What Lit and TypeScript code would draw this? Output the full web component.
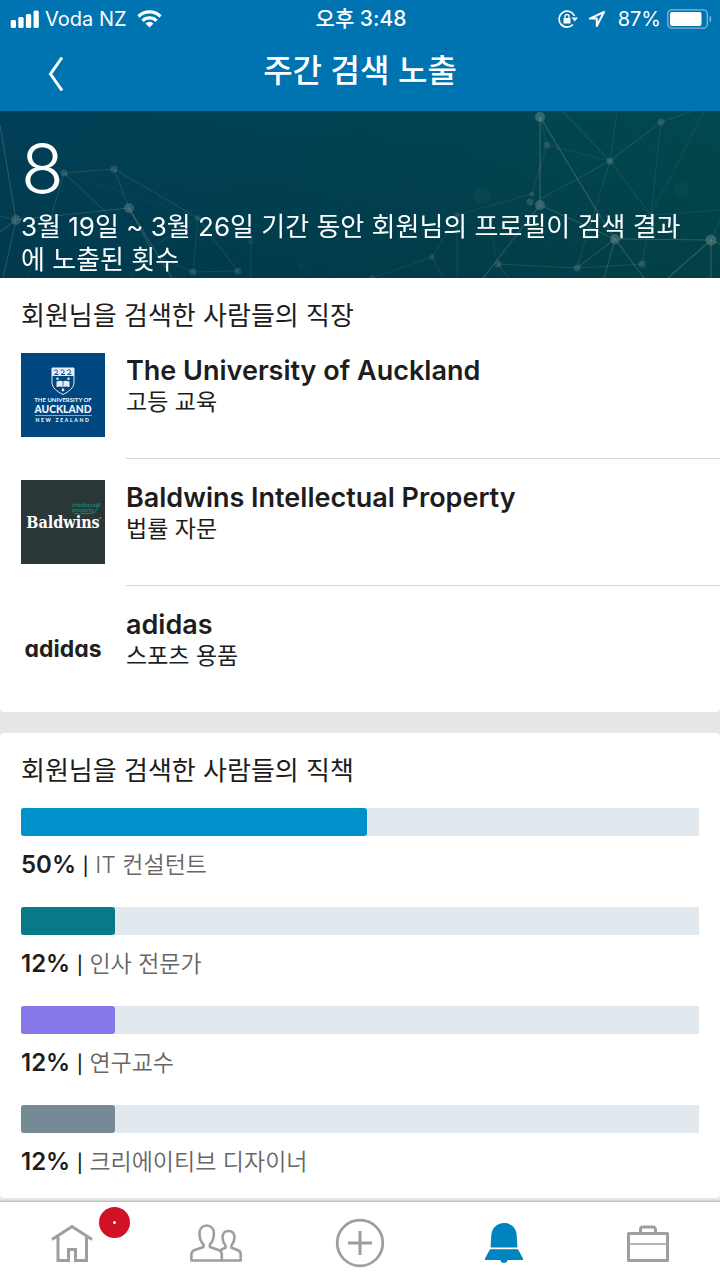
import { LitElement, html, css, svg } from "lit";
import { customElement, property } from "lit/decorators.js";
import { styleMap } from "lit/directives/style-map.js";

const auckland = svg`
  <svg viewBox="0 0 84 84" role="img" aria-label="The University of Auckland">
    <rect width="84" height="84" fill="#00467f" />
    <path d="M31 15h22v14c0 6-5 9.500-11 12.500c-6-3-11-6.500-11-12.500z" fill="#00467f" stroke="#e6edf4" stroke-width="1" />
    <path d="M31 15h22v8h-22z" fill="#e6edf4" />
    <g fill="none" stroke="#00467f" stroke-width=".9">
      <path d="M33 18c1.500-2 4-1 3.500 1s-2.500 1.500-3 2.500h4M39.500 18c1.500-2 4-1 3.500 1s-2.500 1.500-3 2.500h4M46 18c1.500-2 4-1 3.500 1s-2.500 1.500-3 2.500h4" />
    </g>
    <path d="M35.500 28.500c2.500-1 5-1 6.500 0c1.500-1 4-1 6.500 0v5.500c-2.500-.8-5-.8-6.500.2c-1.500-1-4-1-6.500-.2z" fill="#e6edf4" />
    <path d="M42 28.500v5.500" stroke="#00467f" stroke-width=".7" />
    <g fill="#e6edf4"><circle cx="36.500" cy="25.800" r="1.200" /><circle cx="47.500" cy="25.800" r="1.200" /><circle cx="42" cy="37" r="1.400" /></g>
    <g fill="#f2f6fa" text-anchor="middle" font-family="Lato, sans-serif">
      <text x="42" y="49" font-size="6" font-weight="700">THE UNIVERSITY OF</text>
      <text x="42" y="60" font-size="10.300" font-weight="900">AUCKLAND</text>
      <text x="42" y="69" font-size="5" font-weight="900" letter-spacing="1.700">NEW ZEALAND</text>
    </g>
    <path d="M14 62.500h57" stroke="#a9bfd4" stroke-width=".8" />
  </svg>`;

const baldwins = svg`
  <svg viewBox="0 0 84 84" role="img" aria-label="Baldwins Intellectual Property">
    <rect width="84" height="84" fill="#2b3637" />
    <g fill="#12827f" font-family="Lato, sans-serif" font-size="6" font-style="italic" font-weight="700">
      <text x="51" y="27">intellectual</text>
      <text x="51" y="32">property</text>
    </g>
    <path d="M77 23c0 7-3 10.500-9 10.500h-8l-3 3v-3h-4" fill="none" stroke="#12827f" stroke-width="1" />
    <text x="42" y="48" text-anchor="middle" fill="#fff" font-family="DejaVu Serif Condensed, DejaVu Serif, serif" font-size="16" font-weight="700">Baldwins</text>
    <circle cx="79.500" cy="38" r=".8" fill="#aab0b0" />
  </svg>`;

const adidas = svg`
  <svg viewBox="0 0 84 84" role="img" aria-label="adidas">
    <text class="adidas" x="42" y="50" text-anchor="middle" fill="#231f20">adidas</text>
  </svg>`;

const companies = [
  { name: "The University of Auckland", field: "고등 교육", logo: auckland },
  { name: "Baldwins Intellectual Property", field: "법률 자문", logo: baldwins },
  { name: "adidas", field: "스포츠 용품", logo: adidas },
];

const titles = [
  { percent: 50, fill: 51, label: "IT 컨설턴트", color: "#0091ca" },
  { percent: 12, fill: 13.8, label: "인사 전문가", color: "#077a87" },
  { percent: 12, fill: 13.8, label: "연구교수", color: "#8678e8" },
  { percent: 12, fill: 13.8, label: "크리에이티브 디자이너", color: "#768a95" },
];

/* Constellation drawn behind the summary: [x1, y1, x2, y2, opacity] and [x, y, r, opacity]. */
const links = [
  [0, 14, 16, 109, 0.3], [16, 109, 0, 121, 0.3], [16, 109, 3, 167, 0.25], [16, 109, 0, 105, 0.2],
  [16, 109, 129, 97, 0.3], [64, 62, 50, 109, 0.18], [64, 62, 114, 58, 0.22], [64, 62, 107, 102, 0.18],
  [114, 58, 129, 97, 0.2], [114, 58, 198, 107, 0.2], [129, 97, 172, 167, 0.35], [129, 97, 150, 136, 0.3],
  [198, 107, 156, 134, 0.14], [198, 107, 193, 161, 0.14], [198, 107, 238, 160, 0.18], [156, 145, 193, 161, 0.18],
  [193, 161, 238, 160, 0.2], [156, 134, 130, 167, 0.12], [64, 62, 198, 107, 0.07], [251, 130, 251, 167, 0.14],
  [40, 130, 28, 167, 0.08], [290, 122, 312, 167, 0.06], [345, 90, 330, 167, 0.05],
  [540, 6, 540, 94, 0.38], [540, 6, 600, 105, 0.38], [540, 6, 547, 34, 0.15], [547, 34, 532, 83, 0.15],
  [547, 34, 610, 50, 0.15], [562, 0, 610, 50, 0.17], [610, 50, 661, 11, 0.18], [661, 11, 693, 0, 0.18],
  [610, 50, 617, 0, 0.15], [610, 50, 540, 88, 0.2], [610, 50, 653, 107, 0.17], [610, 50, 577, 157, 0.15],
  [661, 11, 651, 104, 0.15], [704, 0, 651, 104, 0.13], [619, 0, 656, 47, 0.06], [651, 104, 720, 99, 0.14],
  [532, 83, 457, 104, 0.15], [540, 94, 483, 167, 0.33], [540, 94, 615, 128, 0.3], [600, 105, 615, 128, 0.3],
  [615, 128, 711, 129, 0.36], [615, 128, 577, 157, 0.25], [615, 128, 604, 167, 0.3], [615, 128, 644, 167, 0.36],
  [711, 129, 668, 167, 0.35], [711, 129, 711, 167, 0.36], [711, 129, 720, 133, 0.3], [711, 129, 720, 110, 0.15],
  [498, 153, 577, 157, 0.22], [577, 157, 642, 153, 0.2], [642, 153, 651, 104, 0.15], [498, 153, 508, 167, 0.2],
  [498, 153, 490, 118, 0.1], [432, 146, 457, 104, 0.14], [432, 146, 372, 167, 0.14], [457, 104, 457, 167, 0.14],
  [432, 146, 443, 167, 0.14], [378, 135, 392, 100, 0.05], [545, 125, 550, 167, 0.05],
];

const dots = [
  [16, 109, 5, 0.36], [64, 62, 3.5, 0.3], [114, 58, 3.5, 0.28], [129, 97, 5, 0.4], [198, 107, 3, 0.18],
  [193, 161, 3.5, 0.28], [238, 160, 3.5, 0.24], [251, 130, 3, 0.12], [301, 155, 2.5, 0.08], [347, 88, 2.5, 0.05],
  [482, 85, 9, 0.06], [540, 6, 5, 0.45], [547, 34, 3.5, 0.25], [532, 83, 2.5, 0.26], [530, 91, 3.5, 0.3],
  [540, 94, 5, 0.4], [610, 50, 3.5, 0.32], [661, 11, 3.5, 0.3], [681, 78, 8, 0.06], [651, 104, 3, 0.12],
  [615, 128, 5, 0.42], [711, 129, 5.5, 0.42], [577, 157, 3.5, 0.3], [642, 153, 3.5, 0.3], [498, 153, 3.5, 0.28],
  [432, 146, 3, 0.2], [457, 104, 3, 0.16], [372, 167, 3, 0.18],
];

const fontStack = css`"Inter", "Noto Sans CJK KR", sans-serif`;

@customElement("status-bar")
class StatusBar extends LitElement {
  static styles = css`
    :host {
      display: grid;
      grid-template-columns: 1fr auto 1fr;
      align-items: center;
      height: 37px;
      padding: 0 8px 0 10px;
      font: 400 20px/24px ${fontStack};
      color: #fff;
    }
    .side { display: flex; align-items: center; gap: 6px; }
    .end { justify-content: flex-end; }
    .time { font-size: 21px; font-weight: 500; }
    .carrier { margin-right: 4px; }
    .arrow { margin: 0 6px 0 4px; }
    svg { display: block; flex: none; }
  `;
  render() {
    return html`
      <div class="side">
        <svg width="29" height="18" viewBox="0 0 29 18" fill="#fff" aria-hidden="true">
          <rect x=".7" y="10" width="5.300" height="8" rx="1.500" /><rect x="8.300" y="7" width="5.300" height="11" rx="1.500" />
          <rect x="15.900" y="4" width="5.300" height="14" rx="1.500" /><rect x="23.500" y=".5" width="5.300" height="17.500" rx="1.500" />
        </svg>
        <span class="carrier">Voda NZ</span>
        <svg width="25" height="18" viewBox="0 0 25 18" aria-hidden="true">
          <g fill="none" stroke="#fff" stroke-width="3.200">
            <path d="M1.500 6.500a15.500 15.500 0 0 1 22 0" /><path d="M5.500 10.800a10 10 0 0 1 14 0" />
          </g>
          <path d="M12.500 17.500l-4-4a5.600 5.600 0 0 1 8 0z" fill="#fff" />
        </svg>
      </div>
      <span class="time">오후 3:48</span>
      <div class="side end">
        <svg width="20" height="18" viewBox="0 0 20 18" fill="none" stroke="#fff" stroke-width="1.700" aria-hidden="true">
          <path d="M16.500 6A8 8 0 1 0 15 14.500" />
          <path d="M13.500 7.500h6.500l-3.200 4z" fill="#fff" stroke="none" />
          <rect x="5.500" y="8" width="7" height="5.500" rx=".6" fill="#fff" stroke="none" />
          <path d="M7 8.500V6.500a2 2 0 0 1 4 0v2" stroke-width="1.300" />
        </svg>
        <svg class="arrow" width="18" height="18" viewBox="0 0 18 18" fill="none" stroke="#fff" stroke-width="2" stroke-linejoin="round" aria-hidden="true">
          <path d="M16 2L1.800 8.600h7v7.400z" />
        </svg>
        <span>87%</span>
        <svg width="45" height="20" viewBox="0 0 45 20" aria-hidden="true">
          <rect x=".8" y=".8" width="39.500" height="18.400" rx="4" fill="none" stroke="#7fb8dc" stroke-width="1.300" />
          <rect x="3" y="3" width="31.500" height="14" rx="2" fill="#fff" />
          <path d="M42.500 6.500c2.300 1.200 2.300 5.800 0 7z" fill="#7fb8dc" />
        </svg>
      </div>
    `;
  }
}

@customElement("tab-bar")
class TabBar extends LitElement {
  static styles = css`
    :host {
      display: block;
      background: #fff;
      border-top: 1px solid #bdbebf;
      box-shadow: 0 -1px 1px #d8d8d8;
    }
    nav { display: grid; grid-template-columns: repeat(5, 1fr); height: 78px; }
    a { position: relative; display: flex; align-items: center; justify-content: center; padding-top: 4px; color: #9d9e9f; }
    .active { color: #0084bf; }
    svg { display: block; overflow: visible; }
    .badge {
      position: absolute;
      left: calc(50% + 27px);
      top: 5px;
      display: grid;
      place-items: center;
      width: 31px;
      height: 31px;
      border-radius: 50%;
      background: #d11124;
    }
    .badge::after { content: ""; width: 3px; height: 3px; border-radius: 50%; background: #fff; }
  `;
  render() {
    return html`
      <nav aria-label="기본 메뉴">
        <a href="#home" aria-label="홈">
          <svg width="42" height="38" viewBox="0 0 42 38" fill="none" stroke="currentColor" stroke-width="3">
            <path d="M1 15.500L21 2.500l20 13" /><path d="M7 13v23.500h10.500V25.500h7v11H35.500V13" />
          </svg>
          <span class="badge"></span>
        </a>
        <a href="#network" aria-label="인맥">
          <svg width="52" height="38" viewBox="0 0 52 38" fill="none" stroke="currentColor" stroke-width="2.600" stroke-linejoin="round">
            <path d="M13.500 20.500c-3-3-4-7-4-11c0-5 3-8 7.200-8s7.200 3 7.200 8c0 4-1 8-4 11v2.500l8.500 3c2.500.9 3.400 2.200 3.400 4.500v6H1.400v-6c0-2.300.9-3.600 3.400-4.500l8.700-3z" />
            <path d="M30.500 26l5-2.300v-2.200c-2-2.500-3-5-3-8c0-4 2.300-6.500 6-6.500s6 2.500 6 6.500c0 3-1 5.500-3 8v2.200l6.500 2.600c2 .8 2.700 2.200 2.700 4.200v6H31.800" />
          </svg>
        </a>
        <a href="#post" aria-label="글쓰기">
          <svg width="50" height="50" viewBox="0 0 50 50" fill="none" stroke="currentColor" stroke-width="2.800">
            <circle cx="25" cy="25" r="22.800" /><path d="M13 25h24M25 13v24" stroke-width="3" />
          </svg>
        </a>
        <a class="active" href="#notifications" aria-label="알림" aria-current="page">
          <svg width="38" height="40" viewBox="0 0 38 40" fill="currentColor">
            <path d="M5.500 24.500L6.300 12C6.800 5 12 0 19 0s12.200 5 12.700 12l.8 12.500z" />
            <path d="M5 26.300h28l5 9.200c.4.900 0 1.500-.8 1.500H22.500c0 4-7 4-7 0H.8c-.8 0-1.200-.6-.8-1.500z" />
          </svg>
        </a>
        <a href="#jobs" aria-label="채용공고">
          <svg width="42" height="37" viewBox="0 0 42 37" fill="none" stroke="currentColor" stroke-width="3" stroke-linejoin="round">
            <rect x="1.500" y="8.500" width="39" height="27" /><path d="M13.500 8V4.500a2.500 2.500 0 0 1 2.500-2.500h10a2.500 2.500 0 0 1 2.500 2.500V8" />
            <path d="M2 19h38" stroke-width="1.500" />
          </svg>
        </a>
      </nav>
    `;
  }
}

@customElement("percent-bar")
class PercentBar extends LitElement {
  @property({ type: Number }) percent = 0;
  @property({ type: Number }) fill = 0;
  @property() label = "";
  @property() color = "";

  static styles = css`
    :host { display: block; font: 400 23px/32px ${fontStack}; color: #1d1d1d; }
    .track { height: 28px; background: #e1e8ee; }
    .fill { height: 100%; border-radius: 3px; }
    p { margin: 13px 0 0; }
    strong { font-size: 24px; line-height: 24px; font-weight: 600; }
    .divider { font-size: 18px; line-height: 24px; font-weight: 500; }
    .label { line-height: 24px; color: #666; font-weight: 350; }
  `;
  render() {
    return html`
      <div class="track">
        <div class="fill" style=${styleMap({ width: `${this.fill}%`, background: this.color })}></div>
      </div>
      <p><strong>${this.percent}%</strong> <span class="divider">|</span> <span class="label">${this.label}</span></p>
    `;
  }
}

@customElement("app-root")
class AppRoot extends LitElement {
  static styles = css`
    :host {
      display: flex;
      flex-direction: column;
      min-height: 100vh;
      background: #e7e7e7;
      color: #1d1d1d;
      font: 400 26px/33px ${fontStack};
    }
    h1, h2, h3, p, ul { margin: 0; padding: 0; font-weight: inherit; font-size: inherit; }
    ul { list-style: none; }
    header { background: #0073b1; color: #fff; padding-bottom: 6px; }
    .title-row { display: grid; grid-template-columns: 72px 1fr 72px; align-items: center; height: 68px; }
    .back { height: 68px; padding: 5px 8px 0 0; border: 0; background: none; color: inherit; display: flex; align-items: center; justify-content: flex-end; }
    h1 { font-size: 32px; line-height: 40px; font-weight: 500; text-align: center; }
    .hero {
      position: relative;
      overflow: hidden;
      padding: 23px 21px 2px;
      color: #fff;
      background: linear-gradient(rgba(0, 20, 20, 0), rgba(0, 20, 25, 0.16)), linear-gradient(100deg, #004058 0%, #014452 60%, #01494e 100%);
    }
    .net { position: absolute; inset: 0; width: 100%; height: 100%; }
    .summary { position: relative; }
    .count { display: block; font-size: 70px; line-height: 70px; font-weight: 300; margin-bottom: 6px; }
    .card { background: #fff; }
    .card + .card { margin-top: 21px; border-radius: 4px; }
    .companies { border-radius: 0 0 4px 4px; }
    h2 { padding: 21px 21px 0; font-weight: 400; }
    .company { display: flex; gap: 21px; padding-left: 21px; }
    .logo { width: 84px; height: 84px; margin: 21px 0 22px; }
    .company:last-child .logo { margin-bottom: 21px; }
    .logo svg { display: block; }
    .info { flex: 1; padding-top: 23px; border-bottom: 1px solid #d6d7d8; }
    .company:last-child .info { border-bottom: 0; }
    h3 { font-size: 27px; line-height: 32px; font-weight: 600; }
    .field { font-size: 23px; line-height: 30px; }
    .bars { display: grid; gap: 26px; padding: 21px 21px 20px; }
    tab-bar { position: sticky; bottom: 0; margin-top: auto; }
    .adidas { font: 700 23px "Inter", sans-serif; font-feature-settings: "cv11"; }
  `;
  render() {
    return html`
      <header>
        <status-bar></status-bar>
        <div class="title-row">
          <button class="back" type="button" aria-label="뒤로">
            <svg width="16" height="36" viewBox="0 0 16 36" fill="none" stroke="#fff" stroke-width="3"><path d="M14 1.500L2.500 18L14 34.500" /></svg>
          </button>
          <h1>주간 검색 노출</h1>
        </div>
      </header>
      <section class="hero">
        <svg class="net" viewBox="0 0 720 167" preserveAspectRatio="xMidYMid slice" aria-hidden="true">
          <g opacity=".75">
            ${links.map(([a, b, c, d, o]) => svg`<line x1=${a} y1=${b} x2=${c} y2=${d} stroke="#b5aea0" stroke-width="1.200" opacity=${o} />`)}
            ${dots.map(([x, y, r, o]) => svg`<circle cx=${x} cy=${y} r=${r} fill="#a5b0a8" opacity=${o} />`)}
          </g>
        </svg>
        <p class="summary">
          <span class="count">8</span>
          3월 19일 ~ 3월 26일 기간 동안 회원님의 프로필이 검색 결과에 노출된 횟수
        </p>
      </section>
      <section class="card companies">
        <h2>회원님을 검색한 사람들의 직장</h2>
        <ul>
          ${companies.map((c) => html`
            <li class="company">
              <div class="logo">${c.logo}</div>
              <div class="info"><h3>${c.name}</h3><p class="field">${c.field}</p></div>
            </li>`)}
        </ul>
      </section>
      <section class="card">
        <h2>회원님을 검색한 사람들의 직책</h2>
        <div class="bars">
          ${titles.map((t) => html`<percent-bar .percent=${t.percent} .fill=${t.fill} .label=${t.label} .color=${t.color}></percent-bar>`)}
        </div>
      </section>
      <tab-bar></tab-bar>
    `;
  }
}
